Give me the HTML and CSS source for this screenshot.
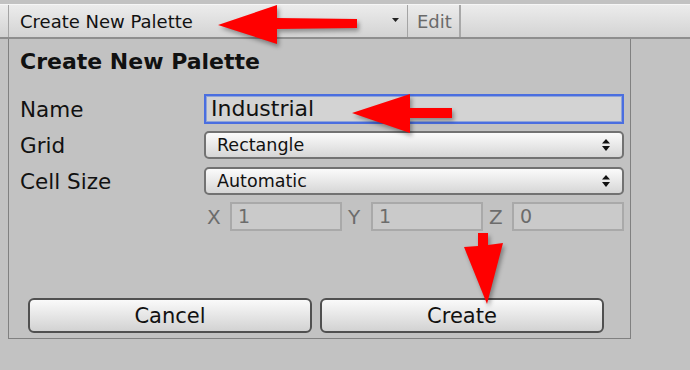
FILE: index.html
```html
<!DOCTYPE html>
<html lang="en">
<head>
    <meta charset="UTF-8">
    <title>Create New Palette</title>
    <link rel="stylesheet" href="styles.css">
</head>
<body>
    <div class="toolbar">
        <div class="tb-dropdown">
            <span>Create New Palette</span>
            <svg class="tb-caret" width="7" height="4" viewBox="0 0 7 4"><polygon points="0,0 7,0 3.5,4" fill="#222"/></svg>
        </div>
        <div class="tb-button">Edit</div>
    </div>

    <div class="panel">
        <div class="panel-title">Create New Palette</div>

        <div class="row row-name">
            <div class="label">Name</div>
            <div class="text-field focused">Industrial</div>
        </div>
        <div class="row row-popup">
            <div class="label">Grid</div>
            <div class="popup">
                <span>Rectangle</span>
                <svg class="updown" width="8" height="12" viewBox="0 0 8 12"><polygon points="4,0 8,4.5 0,4.5" fill="#111"/><polygon points="0,7 8,7 4,12" fill="#111"/></svg>
            </div>
        </div>
        <div class="row row-popup">
            <div class="label">Cell Size</div>
            <div class="popup">
                <span>Automatic</span>
                <svg class="updown" width="8" height="12" viewBox="0 0 8 12"><polygon points="4,0 8,4.5 0,4.5" fill="#111"/><polygon points="0,7 8,7 4,12" fill="#111"/></svg>
            </div>
        </div>
        <div class="row row-vec">
            <div class="label"></div>
            <div class="vec">
                <div class="vec-item"><span class="vec-label">X</span><div class="num-field">1</div></div>
                <div class="vec-item"><span class="vec-label">Y</span><div class="num-field">1</div></div>
                <div class="vec-item"><span class="vec-label">Z</span><div class="num-field">0</div></div>
            </div>
        </div>

        <div class="buttons">
            <button class="btn">Cancel</button>
            <button class="btn">Create</button>
        </div>
    </div>

    <!-- red callout arrows drawn over the screenshot -->
    <svg class="callouts" width="690" height="370" viewBox="0 0 690 370">
        <polygon points="218,25 277,5 277,18 357,19 357,28 277,29 277,44" fill="#ff0000"/>
        <polygon points="352,113 410,94 410,108 452,108 452,118 410,118 410,133" fill="#ff0000"/>
        <polygon points="478,233 488,233 488,245 503,243 487,304 464,247 478,246" fill="#ff0000"/>
    </svg>
</body>
</html>
```

FILE: styles.css
```css
body {
    margin: 0;
    width: 690px;
    height: 370px;
    background: #c2c2c2;
    font-family: "DejaVu Sans", Verdana, sans-serif;
    color: #111;
    position: relative;
    overflow: hidden;
}
.toolbar {
    margin-top: 4px;
    height: 32px;
    padding-left: 8px;
    display: flex;
    background: linear-gradient(#ececec, #d3d3d3);
    border-top: 1px solid #f6f6f6;
    border-bottom: 2px solid #8e8e8e;
}
.tb-dropdown {
    width: 400px;
    box-sizing: border-box;
    border-left: 1px solid #a4a4a4;
    border-right: 1px solid #a4a4a4;
    display: flex;
    align-items: center;
    justify-content: space-between;
    padding: 0 8px 0 11px;
    font-size: 18px;
}
.tb-caret {
    margin-bottom: 3px;
}
.tb-button {
    width: 53px;
    box-sizing: border-box;
    border-right: 2px solid #a8a8a8;
    display: flex;
    align-items: center;
    padding-left: 9px;
    font-size: 18px;
    color: #6a6a6a;
}
.panel {
    margin-left: 8px;
    width: 623px;
    box-sizing: border-box;
    border: 1px solid #808080;
    border-top: none;
    padding: 10px 6px 5px 11px;
}
.panel-title {
    font-weight: bold;
    font-size: 22px;
    line-height: 25px;
    margin-bottom: 20px;
}
.row {
    display: flex;
    align-items: center;
}
.label {
    width: 184px;
    flex: none;
    font-size: 21.5px;
}
.row-name {
    height: 30px;
    margin-bottom: 7px;
}
.row-popup {
    height: 28px;
    margin-bottom: 8px;
}
.row-popup + .row-popup {
    margin-bottom: 7px;
}
.text-field {
    width: 420px;
    height: 30px;
    box-sizing: border-box;
    border: 2px solid #a9a9a9;
    background: #d3d3d3;
    font-size: 22px;
    line-height: 26px;
    padding-left: 5px;
}
.text-field.focused {
    border-color: #4a6ee0;
    box-shadow: inset 0 0 0 1px #8fa4d8;
}
.popup {
    width: 420px;
    height: 28px;
    box-sizing: border-box;
    border: 2px solid #727272;
    border-radius: 5px;
    background: linear-gradient(#fbfbfb, #d6d6d6);
    display: flex;
    align-items: center;
    justify-content: space-between;
    padding: 0 12px 0 11px;
    font-size: 17.5px;
}
.row-vec {
    height: 29px;
}
.vec {
    display: flex;
    gap: 3px;
    width: 420px;
}
.vec-item {
    width: 138px;
    display: flex;
    align-items: center;
}
.vec-label {
    width: 26px;
    padding-left: 3px;
    box-sizing: border-box;
    font-size: 20px;
    color: #6c6c6c;
}
.num-field {
    width: 112px;
    height: 29px;
    box-sizing: border-box;
    border: 2px solid #a9a9a9;
    background: #cacaca;
    color: #6c6c6c;
    font-size: 19px;
    line-height: 25px;
    padding-left: 6px;
}
.buttons {
    display: flex;
    gap: 8px;
    margin-top: 67px;
    margin-left: 8px;
}
.btn {
    width: 284px;
    height: 35px;
    border: 2px solid #505050;
    border-radius: 6px;
    background: linear-gradient(#fafafa, #d2d2d2);
    font-family: "DejaVu Sans", Verdana, sans-serif;
    font-size: 21px;
    color: #111;
    padding: 0;
}
.callouts {
    position: absolute;
    left: 0;
    top: 0;
    filter: drop-shadow(2px 3px 2px rgba(0, 0, 0, 0.35));
}
```
